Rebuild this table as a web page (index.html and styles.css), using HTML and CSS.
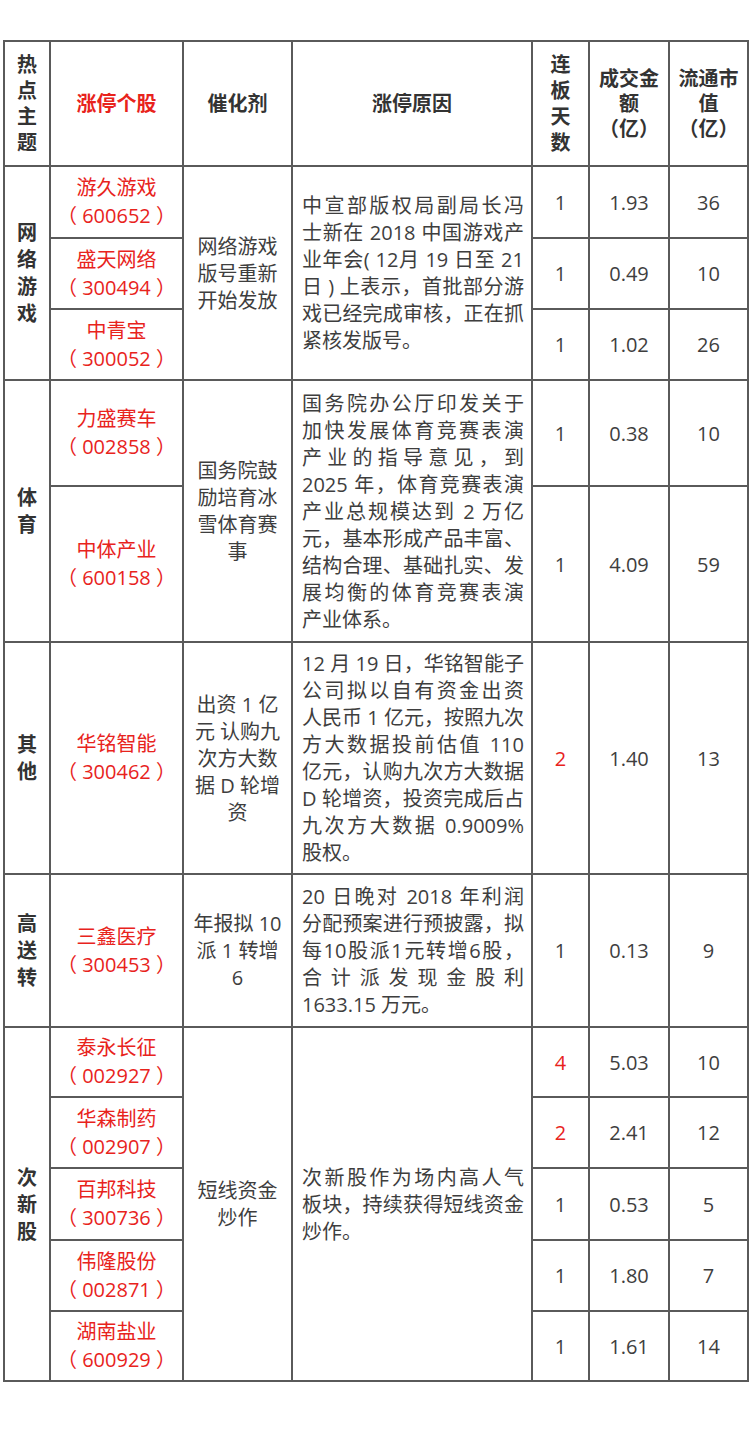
FILE: index.html
```html
<!DOCTYPE html>
<html lang="zh-CN">
<head>
<meta charset="utf-8">
<title>涨停个股</title>
<link rel="stylesheet" href="styles.css">
</head>
<body>
<table class="tbl">
  <colgroup>
    <col class="c-topic">
    <col class="c-stock">
    <col class="c-cat">
    <col class="c-reason">
    <col class="c-days">
    <col class="c-amt">
    <col class="c-cap">
  </colgroup>
  <thead>
    <tr class="h-head">
      <th class="th-narrow">热点主题</th>
      <th class="red">涨停个股</th>
      <th>催化剂</th>
      <th>涨停原因</th>
      <th class="th-days">连板天数</th>
      <th class="th-val">成交金<br>额<br>（亿）</th>
      <th class="th-val">流通市<br>值<br>（亿）</th>
    </tr>
  </thead>
  <tbody>
    <tr class="h72">
      <td rowspan="3" class="topic">网络游戏</td>
      <td class="stock">游久游戏<br>（ 600652 ）</td>
      <td rowspan="3" class="cat">网络游戏版号重新开始发放</td>
      <td rowspan="3" class="reason">
        <span class="ln">中宣部版权局副局长冯</span>
        <span class="ln">士新在 2018 中国游戏产</span>
        <span class="ln">业年会( 12月 19 日至 21</span>
        <span class="ln">日 ) 上表示，首批部分游</span>
        <span class="ln">戏已经完成审核，正在抓</span>
        <span class="ln end">紧核发版号。</span>
      </td>
      <td class="num">1</td>
      <td class="num">1.93</td>
      <td class="num">36</td>
    </tr>
    <tr class="h71">
      <td class="stock">盛天网络<br>（ 300494 ）</td>
      <td class="num">1</td>
      <td class="num">0.49</td>
      <td class="num">10</td>
    </tr>
    <tr class="h71">
      <td class="stock">中青宝<br>（ 300052 ）</td>
      <td class="num">1</td>
      <td class="num">1.02</td>
      <td class="num">26</td>
    </tr>

    <tr class="h106">
      <td rowspan="2" class="topic">体育</td>
      <td class="stock">力盛赛车<br>（ 002858 ）</td>
      <td rowspan="2" class="cat">国务院鼓励培育冰雪体育赛事</td>
      <td rowspan="2" class="reason">
        <span class="ln">国务院办公厅印发关于</span>
        <span class="ln">加快发展体育竞赛表演</span>
        <span class="ln">产业的指导意见，到</span>
        <span class="ln">2025 年，体育竞赛表演</span>
        <span class="ln">产业总规模达到 2 万亿</span>
        <span class="ln">元，基本形成产品丰富、</span>
        <span class="ln">结构合理、基础扎实、发</span>
        <span class="ln">展均衡的体育竞赛表演</span>
        <span class="ln end">产业体系。</span>
      </td>
      <td class="num">1</td>
      <td class="num">0.38</td>
      <td class="num">10</td>
    </tr>
    <tr class="h156">
      <td class="stock">中体产业<br>（ 600158 ）</td>
      <td class="num">1</td>
      <td class="num">4.09</td>
      <td class="num">59</td>
    </tr>

    <tr class="h232">
      <td class="topic">其他</td>
      <td class="stock">华铭智能<br>（ 300462 ）</td>
      <td class="cat">出资 1 亿元 认购九次方大数据 D 轮增资</td>
      <td class="reason">
        <span class="ln">12 月 19 日，华铭智能子</span>
        <span class="ln">公司拟以自有资金出资</span>
        <span class="ln">人民币 1 亿元，按照九次</span>
        <span class="ln">方大数据投前估值 110</span>
        <span class="ln">亿元，认购九次方大数据</span>
        <span class="ln">D 轮增资，投资完成后占</span>
        <span class="ln">九次方大数据 0.9009%</span>
        <span class="ln end">股权。</span>
      </td>
      <td class="num red">2</td>
      <td class="num">1.40</td>
      <td class="num">13</td>
    </tr>

    <tr class="h153">
      <td class="topic">高送转</td>
      <td class="stock">三鑫医疗<br>（ 300453 ）</td>
      <td class="cat">年报拟 10 派 1 转增 6</td>
      <td class="reason">
        <span class="ln">20 日晚对 2018 年利润</span>
        <span class="ln">分配预案进行预披露，拟</span>
        <span class="ln">每10股派1元转增6股，</span>
        <span class="ln">合计派发现金股利</span>
        <span class="ln end">1633.15 万元。</span>
      </td>
      <td class="num">1</td>
      <td class="num">0.13</td>
      <td class="num">9</td>
    </tr>

    <tr class="h70">
      <td rowspan="5" class="topic">次新股</td>
      <td class="stock">泰永长征<br>（ 002927 ）</td>
      <td rowspan="5" class="cat">短线资金炒作</td>
      <td rowspan="5" class="reason">
        <span class="ln">次新股作为场内高人气</span>
        <span class="ln">板块，持续获得短线资金</span>
        <span class="ln end">炒作。</span>
      </td>
      <td class="num red">4</td>
      <td class="num">5.03</td>
      <td class="num">10</td>
    </tr>
    <tr class="h71">
      <td class="stock">华森制药<br>（ 002907 ）</td>
      <td class="num red">2</td>
      <td class="num">2.41</td>
      <td class="num">12</td>
    </tr>
    <tr class="h72">
      <td class="stock">百邦科技<br>（ 300736 ）</td>
      <td class="num">1</td>
      <td class="num">0.53</td>
      <td class="num">5</td>
    </tr>
    <tr class="h71">
      <td class="stock">伟隆股份<br>（ 002871 ）</td>
      <td class="num">1</td>
      <td class="num">1.80</td>
      <td class="num">7</td>
    </tr>
    <tr class="h70">
      <td class="stock">湖南盐业<br>（ 600929 ）</td>
      <td class="num">1</td>
      <td class="num">1.61</td>
      <td class="num">14</td>
    </tr>
  </tbody>
</table>
</body>
</html>
```

FILE: styles.css
```css
html, body {
  margin: 0;
  padding: 0;
  background: #ffffff;
}

body {
  font-family: "Open Sans", "Noto Sans CJK SC", sans-serif;
  font-size: 20px;
  color: #3e3e3e;
}

.tbl {
  margin: 40px 0 0 3px;
  width: 745px;
  border-collapse: collapse;
  table-layout: fixed;
  border: 2px solid #5a5a5a;
}

.c-topic  { width: 46px; }
.c-stock  { width: 133px; }
.c-cat    { width: 109px; }
.c-reason { width: 240px; }
.c-days   { width: 57px; }
.c-amt    { width: 80px; }
.c-cap    { width: 79px; }

.tbl th,
.tbl td {
  border: 2px solid #5a5a5a;
  padding: 0;
  text-align: center;
  vertical-align: middle;
  line-height: 27px;
  word-break: normal;
}

.tbl th {
  font-weight: 700;
  color: #333333;
  line-height: 26px;
}

.tbl th.th-narrow { padding: 0 8px; }
.tbl th.th-days { padding: 0 10px; }
.tbl th.th-val { padding: 0 4px; line-height: 25px; }

.red, .tbl th.red { color: #e8231c; }

.h-head { height: 125px; }
.h70  { height: 70px; }
.h71  { height: 71px; }
.h72  { height: 72px; }
.h106 { height: 106px; }
.h153 { height: 153px; }
.h156 { height: 156px; }
.h232 { height: 232px; }

.tbl td.topic {
  font-weight: 700;
  color: #333333;
  padding: 0 8px;
}

.tbl td.stock {
  color: #e8231c;
  line-height: 28px;
}

.tbl td.cat {
  padding: 0 8px;
}

.tbl td.reason {
  padding: 0 7px 0 9px;
  text-align: justify;
}

.ln {
  display: block;
  white-space: nowrap;
  text-align: justify;
  text-align-last: justify;
}

.ln.end {
  text-align-last: left;
}

.tbl td.num.red { color: #e8231c; }
```
